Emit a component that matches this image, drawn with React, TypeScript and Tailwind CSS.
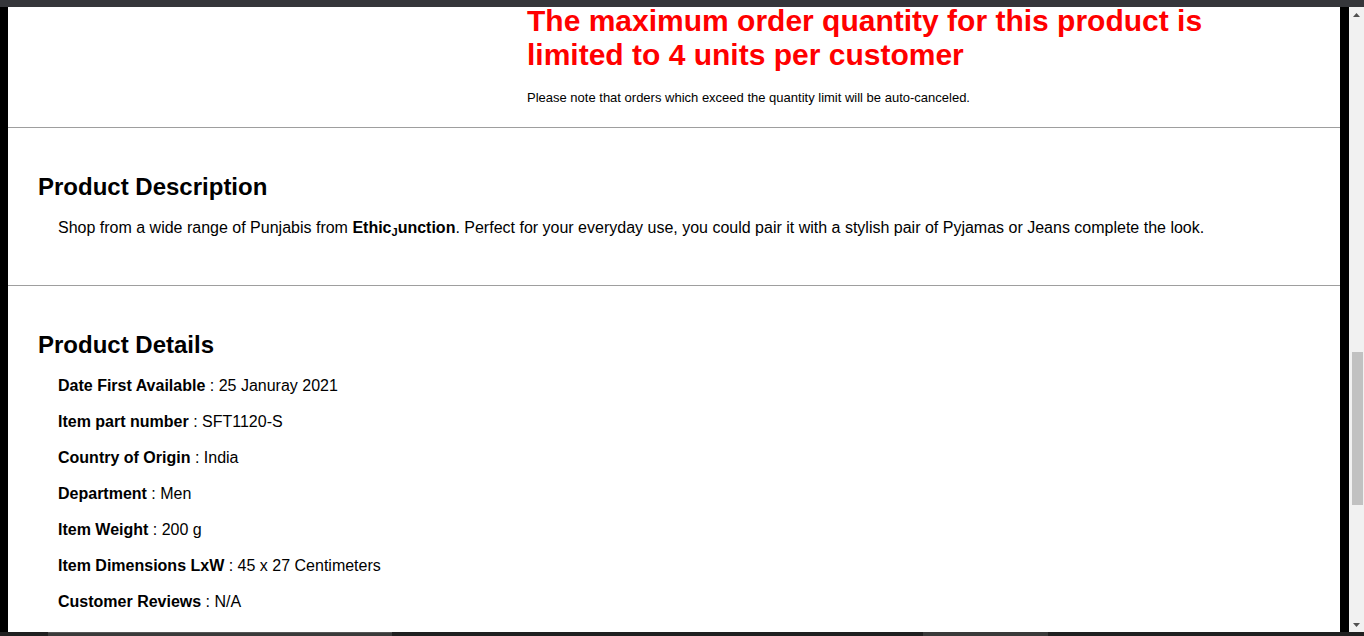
import React from 'react';

const details: [string, string][] = [
  ['Date First Available', '25 Januray 2021'],
  ['Item part number', 'SFT1120-S'],
  ['Country of Origin', 'India'],
  ['Department', 'Men'],
  ['Item Weight', '200 g'],
  ['Item Dimensions LxW', '45 x 27 Centimeters'],
  ['Customer Reviews', 'N/A'],
];

const App: React.FC = () => {
  return (
    <div
      className="w-[1364px] h-[636px] overflow-hidden flex flex-col bg-black text-black"
      style={{ fontFamily: '"Liberation Sans", Arial, sans-serif' }}
    >
      {/* top frame */}
      <div className="h-[7px] bg-[#35363a] shrink-0 relative z-10" />

      <div className="flex flex-1 min-h-0">
        <div className="w-[8px] bg-black shrink-0" />

        {/* page */}
        <div className="w-[1332px] bg-white">
          {/* order limit */}
          <div className="flex pb-[21px]">
            <div className="w-[519px] shrink-0" />
            <div className="w-[720px]">
              <h2 className="-mt-[3px] text-[30px] leading-[34px] font-bold text-[#ff0000]">
                The maximum order quantity for this product is limited to 4 units per customer
              </h2>
              <p className="mt-[18px] text-[13px] leading-[16px]">
                Please note that orders which exceed the quantity limit will be auto-canceled.
              </p>
            </div>
          </div>

          <div className="border-t border-[#9e9e9e]" />

          {/* description */}
          <div className="pt-[45px] pb-[46px] pl-[30px]">
            <h3 className="text-[24px] leading-[28px] font-bold">Product Description</h3>
            <p className="mt-[17px] ml-[20px] text-[16px] leading-[20px]">
              Shop from a wide range of Punjabis from{' '}
              <b>
                Ethic<span className="text-[11px] relative top-[3px]">J</span>unction
              </b>
              . Perfect for your everyday use, you could pair it with a stylish pair of Pyjamas or Jeans complete the look.
            </p>
          </div>

          <div className="border-t border-[#9e9e9e]" />

          {/* details */}
          <div className="pt-[45px] pl-[30px]">
            <h3 className="text-[24px] leading-[28px] font-bold">Product Details</h3>
            <ul className="mt-[17px] ml-[20px] flex flex-col gap-4 text-[16px] leading-[20px]">
              {details.map(([k, v]) => (
                <li key={k}>
                  <b>{k}</b> : {v}
                </li>
              ))}
            </ul>
          </div>
        </div>

        <div className="w-[9px] bg-black shrink-0" />

        {/* scrollbar */}
        <div className="w-[15px] bg-[#f1f1f1] shrink-0 flex flex-col items-center">
          <div className="h-[15px] flex items-center justify-center">
            <svg width="7" height="4" viewBox="0 0 7 4">
              <path d="M3.5 0L7 4H0z" fill="#505050" />
            </svg>
          </div>
          <div className="h-[330px]" />
          <div className="w-[11px] h-[153px] bg-[#c1c1c1] ml-[2px]" />
          <div className="flex-1" />
          <div className="h-[15px] flex items-center justify-center">
            <svg width="7" height="4" viewBox="0 0 7 4">
              <path d="M0 0H7L3.5 4z" fill="#505050" />
            </svg>
          </div>
        </div>
      </div>

      {/* bottom strip */}
      <div className="h-[4px] bg-[#202020] shrink-0 flex">
        <div className="w-[48px]" />
        <div className="w-[344px] bg-[#3a3a3a] border-t border-[#555]" />
        <div className="w-[531px]" />
        <div className="w-[125px] bg-[#3a3a3a]" />
      </div>
    </div>
  );
};

export default App;
